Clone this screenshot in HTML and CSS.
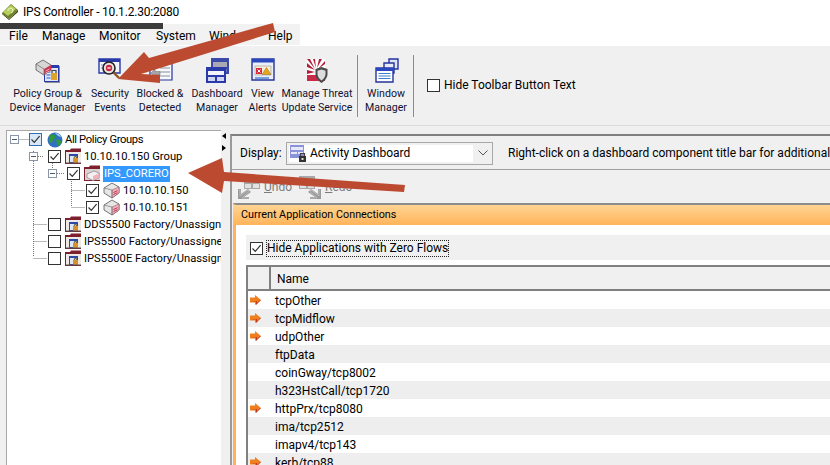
FILE: index.html
```html
<!DOCTYPE html>
<html lang="en">
<head>
<meta charset="utf-8">
<title>IPS Controller</title>
<link rel="stylesheet" href="styles.css">
</head>
<body>
<svg class="defs" width="0" height="0" aria-hidden="true">
  <defs>
    <symbol id="tick" viewBox="0 0 11 11"><path d="M1.5 5.5 4.3 8.3 9.6 2.2" fill="none" stroke="#333" stroke-width="1.2"/></symbol>
    <symbol id="folder" viewBox="0 0 17 17">
      <path d="M0 2h5l1-1.5h10V16H0z" fill="#7d1f2c"/>
      <path d="M1 4h15v11H1z" fill="#efe9e6"/>
      <path d="M4 6h9v9H4z" fill="#2e48a8"/>
      <path d="M5 8h7v6H5z" fill="#dfe6f5"/>
      <path d="M8 10h5v5H8z" fill="#d8912a"/>
      <path d="M9.3 10V8.7h2.4V10" fill="none" stroke="#553" stroke-width="1"/>
      <path d="M1 15h15" stroke="#555" stroke-width="1"/>
    </symbol>
    <symbol id="openfolder" viewBox="0 0 17 17">
      <path d="M0 2h5l1-1.5h10V16H0z" fill="#7d1f2c"/>
      <path d="M1 4h15v11H1z" fill="#d9d2d2"/>
      <path d="M3 9l7-3 5 2v5l-6 2.500-6-3z" fill="#f4f0f0" stroke="#8a7a7c" stroke-width=".7"/>
      <path d="M9 11l6-2.500v4.500l-6 2.500z" fill="#eeb2bd"/>
    </symbol>
    <symbol id="device" viewBox="0 0 17 17">
      <path d="M1 6 9 1l7 4v6l-7 5-8-5z" fill="#e9e6e6" stroke="#666" stroke-width=".9"/>
      <path d="M9 8l7-3v6l-7 5z" fill="#efb3bf" stroke="#8c6068" stroke-width=".6"/>
      <path d="M10.500 10.500l4-1.800M10.500 12.500l4-1.800" stroke="#c8324c" stroke-width="1"/>
      <path d="M1 6l8 2v8" fill="none" stroke="#777" stroke-width=".7"/>
    </symbol>
    <symbol id="flag" viewBox="0 0 11 10">
      <path d="M0 2.500h5V0l6 5-6 5V7.500H0z" fill="#f07f1e"/>
      <path d="M0 6.500h6V10l5-5-1 0-3 3V6z" fill="#c23a18"/>
    </symbol>
    <symbol id="undoicon" viewBox="0 0 24 24">
      <path d="M7 1h16v13H7z" fill="#a8a8a8"/>
      <path d="M8 4h14v3H8zM8 9h6v4H8zM16 9h6v4h-6z" fill="#e2e2e2"/>
      <path d="M1 14h3v5l7-5 3 3-7 5h5v2H1z" fill="#9a9a9a"/>
      <path d="M2 15h1v6l8-6 1 1.500L5 23h7" fill="none" stroke="#c8c8c8" stroke-width=".7"/>
    </symbol>
    <symbol id="redoicon" viewBox="0 0 24 24">
      <path d="M1 1h16v13H1z" fill="#a8a8a8"/>
      <path d="M2 4h14v3H2zM2 9h6v4H2zM10 9h6v4h-6z" fill="#e2e2e2"/>
      <path d="M23 14h-3v5l-7-5-3 3 7 5h-5v2h11z" fill="#9a9a9a"/>
      <path d="M22 15h-1v6l-8-6-1 1.500L19 23h-7" fill="none" stroke="#c8c8c8" stroke-width=".7"/>
    </symbol>
  </defs>
</svg>

<header class="titlebar">
  <svg class="appicon" width="16" height="16" viewBox="0 0 16 16" aria-hidden="true">
    <path d="M0 9 9 0l7 6-9 9z" fill="#6f7f2a"/>
    <path d="M1 8 9 1l5 4-8 7z" fill="#b6cf5e"/>
    <path d="M0 9l7 6 9-9v2l-9 8-7-6z" fill="#39420f"/>
    <path d="M6 7a2.500 2.500 0 1 1 3 2" fill="none" stroke="#eef5c4" stroke-width="1"/>
  </svg>
  <span class="apptitle">IPS Controller - 10.1.2.30:2080</span>
</header>

<nav class="menubar">
  <span class="m-file">File</span><span class="m-manage">Manage</span><span class="m-monitor">Monitor</span><span class="m-system">System</span><span class="m-window">Window</span><span class="m-help">Help</span>
</nav>

<section class="toolbar">
  <div class="tools">
    <div class="tool">
      <svg width="26" height="26" viewBox="0 0 26 26" aria-hidden="true">
        <path d="M10 8h15v17H10z" fill="#8d8d9a"/>
        <path d="M9 7h15v17H9z" fill="#2a3aa8"/>
        <path d="M10 10h13v13H10z" fill="#dfe6f6"/>
        <path d="M11.500 14h4M11.500 17h4M11.500 20h4" stroke="#3158c0" stroke-width="1.200"/>
        <path d="M16 15h6v7h-6z" fill="#e0a22a"/>
        <path d="M17 15v-2.500h4V15" fill="none" stroke="#444" stroke-width="1.200"/>
        <path d="M1 6 8 2l8 5v5l-7 5-8-5z" fill="#d6d6d6" stroke="#555" stroke-width=".8"/>
        <path d="M9 11l7-4v5l-7 5z" fill="#cf3350"/>
        <path d="M1 6l8 5v6" fill="none" stroke="#666" stroke-width=".7"/>
        <path d="M10.500 13l4-2M10.500 15l4-2" stroke="#f2b7c1" stroke-width=".9"/>
      </svg>
      <span>Policy Group &amp;<br>Device Manager</span>
    </div>
    <div class="tool">
      <svg width="26" height="26" viewBox="0 0 26 26" aria-hidden="true">
        <path d="M2 1h21v14H2z" fill="#f3f5fb" stroke="#2a3aa8" stroke-width="1.400"/>
        <path d="M2 1h21v3H2z" fill="#2a3aa8"/>
        <path d="M4 7h5M4 10h4" stroke="#7d8fd0"/>
        <circle cx="12" cy="10" r="6" fill="#e6e6e6" stroke="#222" stroke-width="1.600"/>
        <circle cx="12" cy="10" r="3.200" fill="#c92840"/>
        <path d="M10.300 10h3.400" stroke="#fff" stroke-width="1.200"/>
        <path d="M16.500 14.500 22 20" stroke="#8a5a20" stroke-width="2.400"/>
      </svg>
      <span>Security<br>Events</span>
    </div>
    <div class="tool">
      <svg width="26" height="26" viewBox="0 0 26 26" aria-hidden="true">
        <path d="M3 1h22v21H3z" fill="#f7f8fc" stroke="#24349c" stroke-width="1.200"/>
        <path d="M3 1h22v3H3z" fill="#2a48c0"/>
        <path d="M13 10h10M13 14h10M13 18h10" stroke="#8b8f9c"/>
        <path d="M4 15l4-4v2.500h5v3.500H8v2.500z" fill="#a6a6a6" stroke="#777" stroke-width=".6"/>
      </svg>
      <span>Blocked &amp;<br>Detected</span>
    </div>
    <div class="tool">
      <svg width="26" height="26" viewBox="0 0 26 26" aria-hidden="true">
        <path d="M7 0h18v16H7z" fill="#3b4aa6"/>
        <path d="M9 4h14v5H9z" fill="#a9a9b4"/>
        <path d="M9 11h14v3H9z" fill="#6e78b8"/>
        <path d="M2 9h20v16H2z" fill="#2a3aa8"/>
        <path d="M4 13h16v4H4z" fill="#f2f4fb"/>
        <path d="M4 19h7v4H4zM13 19h7v4h-7z" fill="#cfd6f0"/>
      </svg>
      <span>Dashboard<br>Manager</span>
    </div>
    <div class="tool">
      <svg width="24" height="26" viewBox="0 0 24 26" aria-hidden="true">
        <path d="M1 1h22v21H1z" fill="#eceef6" stroke="#24349c" stroke-width="1.400"/>
        <path d="M1 1h22v3.500H1z" fill="#2a48c0"/>
        <path d="M4 8h16v9H4z" fill="#f4edd8" stroke="#999" stroke-width=".6"/>
        <path d="M5 10h6v6H5z" fill="#d9283a"/>
        <path d="M6.500 11.500l3 3m0-3l-3 3" stroke="#fff"/>
        <path d="M15.500 9.500l4.500 7h-9z" fill="#e8a51c" stroke="#7a5a10" stroke-width=".4"/>
        <path d="M4 20h14" stroke="#3f7fd0" stroke-width="1.400"/>
      </svg>
      <span>View<br>Alerts</span>
    </div>
    <div class="tool">
      <svg width="24" height="26" viewBox="0 0 24 26" aria-hidden="true">
        <path d="M2 1h18v22H2z" fill="#fff"/>
        <path d="M2 1h3l5 10zM8 1h2l1 9zM14 1h3l-5 9zM20 3v3l-7 5zM2 5l8 7-8-3zM2 12l8 2-8 2z" fill="#b31d3c"/>
        <path d="M2 17h18v6H2z" fill="#c92a48"/>
        <path d="M16.500 9l6 2v5c0 4-3 7-6 9-3-2-6-5-6-9v-5z" fill="#4a4a4a"/>
        <path d="M16.500 11.500l4 1.200V16c0 3-2 5-4 6.500-2-1.500-4-3.500-4-6.500v-3.300z" fill="#dcdcdc"/>
      </svg>
      <span>Manage Threat<br>Update Service</span>
    </div>
  </div>
  <i class="sep sep-a"></i>
  <div class="tool tool-win">
    <svg width="25" height="26" viewBox="0 0 25 26" aria-hidden="true">
      <path d="M15 1h9v10h-9z" fill="#dfe3f6" stroke="#24349c" stroke-width="1.400"/>
      <path d="M10 5h10v10H10z" fill="#e8ebf9" stroke="#24349c" stroke-width="1.400"/>
      <path d="M2 10h17v14H2z" fill="#fff" stroke="#24349c" stroke-width="1.400"/>
      <path d="M2 10h17v3H2z" fill="#2a48c0"/>
      <path d="M4.500 15.500h12M4.500 18h12M4.500 20.500h12" stroke="#3f7fd0" stroke-width="1.200"/>
    </svg>
    <span>Window<br>Manager</span>
  </div>
  <i class="sep sep-b"></i>
  <label class="hide-text"><span class="chk"></span>Hide Toolbar Button Text</label>
</section>

<main class="workspace">
  <aside class="tree">
    <svg class="treelines" width="110" height="135" aria-hidden="true">
      <path d="M19.500 8.500h9M33.500 20v106M38 25.500h6M33.500 93.500h14M33.500 110.500h14M33.500 127.500h14M52.500 30v8M57 42.500h7M71.500 48v28M71.500 59.500h13M71.500 76.500h13" fill="none" stroke="#777" stroke-dasharray="1 1"/>
    </svg>
    <div class="row r0"><b class="exp"></b><span class="chk chk-hover"><svg width="11" height="11"><use href="#tick"/></svg></span>
      <svg class="globe" width="16" height="16" viewBox="0 0 16 16" aria-hidden="true"><circle cx="8" cy="8" r="7.500" fill="#2f6fc4"/><path d="M3 3c2-1 4-1 5 1s-1 3-2 4 0 3-2 3-3-4-1-8zM9 8c2-1 5 0 5 2s-2 4-3 4-1-3-2-6z" fill="#2f9a3a"/><path d="M8 1c3 0 5 1 6 4l-3-1z" fill="#9bd0ef"/></svg>
      <span class="name n0">All Policy Groups</span></div>
    <div class="row r1"><b class="exp"></b><span class="chk"><svg width="11" height="11"><use href="#tick"/></svg></span><svg class="ti" width="17" height="17"><use href="#folder"/></svg><span class="name">10.10.10.150 Group</span></div>
    <div class="row r2"><b class="exp"></b><span class="chk"><svg width="11" height="11"><use href="#tick"/></svg></span><svg class="ti" width="17" height="17"><use href="#openfolder"/></svg><span class="name sel">IPS_CORERO</span></div>
    <div class="row r3"><span class="chk"><svg width="11" height="11"><use href="#tick"/></svg></span><svg class="ti" width="17" height="17"><use href="#device"/></svg><span class="name n3">10.10.10.150</span></div>
    <div class="row r3"><span class="chk"><svg width="11" height="11"><use href="#tick"/></svg></span><svg class="ti" width="17" height="17"><use href="#device"/></svg><span class="name n3">10.10.10.151</span></div>
    <div class="row r4"><span class="chk"></span><svg class="ti" width="17" height="17"><use href="#folder"/></svg><span class="name">DDS5500 Factory/Unassigned</span></div>
    <div class="row r4"><span class="chk"></span><svg class="ti" width="17" height="17"><use href="#folder"/></svg><span class="name">IPS5500 Factory/Unassigned</span></div>
    <div class="row r4"><span class="chk"></span><svg class="ti" width="17" height="17"><use href="#folder"/></svg><span class="name">IPS5500E Factory/Unassigned</span></div>
  </aside>

  <div class="split"><i class="tri tri-l"></i><i class="tri tri-r"></i></div>

  <section class="content">
    <div class="display">
      <span class="d-label">Display:</span>
      <div class="combo">
        <div class="combo-field">
          <svg width="17" height="18" viewBox="0 0 17 18" aria-hidden="true"><path d="M0 1h14v13H0z" fill="#8b93d8"/><path d="M1 3h12v3H1zM1 8h6v2H1zM8 8h5v2H8z" fill="#e7e9fa"/><path d="M9 12h7v6H9z" fill="#333"/><path d="M10.500 12V9.500h4V12" fill="none" stroke="#444" stroke-width="1.200"/><path d="M11.500 14h2v2h-2z" fill="#ddd"/></svg>
          <span>Activity Dashboard</span>
        </div>
        <svg class="chev" width="10" height="6" viewBox="0 0 10 6" aria-hidden="true"><path d="M.5.500 5 5 9.500.500" fill="none" stroke="#555"/></svg>
      </div>
      <span class="d-hint">Right-click on a dashboard component title bar for additional options.</span>
    </div>
    <div class="undo">
      <svg width="24" height="24" aria-hidden="true"><use href="#undoicon"/></svg><span class="u-text"><u>U</u>ndo</span>
      <svg class="redo-i" width="24" height="24" aria-hidden="true"><use href="#redoicon"/></svg><span class="u-text"><u>R</u>edo</span>
    </div>
    <div class="panel">
      <div class="panel-head">Current Application Connections</div>
      <div class="panel-body">
        <div class="zero"><span class="chk"><svg width="11" height="11"><use href="#tick"/></svg></span><span class="focus">Hide Applications with Zero Flows</span></div>
        <div class="table">
          <div class="thead"><span class="th-flag"></span><span class="th-name">Name</span></div>
          <div class="tr"><svg width="11" height="10"><use href="#flag"/></svg><span>tcpOther</span></div>
          <div class="tr"><svg width="11" height="10"><use href="#flag"/></svg><span>tcpMidflow</span></div>
          <div class="tr"><svg width="11" height="10"><use href="#flag"/></svg><span>udpOther</span></div>
          <div class="tr"><i class="noflag"></i><span>ftpData</span></div>
          <div class="tr"><i class="noflag"></i><span>coinGway/tcp8002</span></div>
          <div class="tr"><i class="noflag"></i><span>h323HstCall/tcp1720</span></div>
          <div class="tr"><svg width="11" height="10"><use href="#flag"/></svg><span>httpPrx/tcp8080</span></div>
          <div class="tr"><i class="noflag"></i><span>ima/tcp2512</span></div>
          <div class="tr"><i class="noflag"></i><span>imapv4/tcp143</span></div>
          <div class="tr"><svg width="11" height="10"><use href="#flag"/></svg><span>kerb/tcp88</span></div>
        </div>
      </div>
    </div>
  </section>
</main>

<div class="redaction"></div>
<svg class="arrows" width="830" height="465" viewBox="0 0 830 465" aria-hidden="true">
  <path d="M273 23 275 32 141 74 160 75 160 83 118 79 144 52 149 58z" fill="#bc4a30"/>
  <path d="M405 185 404 192 224 181 222 193 188 173 222 158 224 172z" fill="#bc4a30"/>
</svg>
</body>
</html>
```
FILE: styles.css
```css
* { box-sizing: border-box; }
html, body { margin: 0; padding: 0; }
body {
  position: relative;
  width: 830px;
  height: 465px;
  overflow: hidden;
  background: #fff;
  color: #000;
  font-family: Roboto, "Open Sans", "Liberation Sans", sans-serif;
  font-size: 12px;
}
.defs { position: absolute; }

.titlebar { display: flex; align-items: center; height: 24px; padding-left: 2px; gap: 5px; }
.apptitle { font-size: 12px; letter-spacing: -.2px; }
.appicon { flex: none; }

.redaction { position: absolute; left: 0; top: 23px; width: 163px; height: 6px; background: #3c3c3c; }

.menubar { position: relative; height: 21px; width: 300px; background: #f2f2f2; display: flex; align-items: center; font-size: 12px; padding: 3px 0 0 9px; }
.menubar span { flex: none; }
.m-file { width: 33px; }
.m-manage { width: 57px; }
.m-monitor { width: 57px; }
.m-system { width: 53px; }
.m-window { width: 59px; }

.toolbar {
  display: flex;
  margin-top: 1px;
  height: 79px;
  background: #f0f0f0;
  align-items: flex-start;
  padding-left: 12px;
}
.tools { display: grid; grid-template-columns: 71px 34px 46px 48px 23px 66px; column-gap: 10px; }
.tool { display: flex; flex-direction: column; align-items: center; padding-top: 12px; font-size: 10.6px; line-height: 14px; color: #101030; text-align: center; white-space: nowrap; }
.tool svg { margin-bottom: 3px; height: 26px; flex: none; }
.tool span { display: block; }
.tool-win { width: 38px; margin-left: 9px; }
.sep { display: block; width: 1px; height: 62px; margin-top: 9px; background: #8c8c8c; flex: none; }
.sep-a { margin-left: 7px; }
.sep-b { margin-left: 8px; }
.hide-text { display: flex; align-items: center; gap: 4px; margin: 32px 0 0 13px; font-size: 12px; }

.chk { flex: none; display: flex; align-items: center; justify-content: center; width: 13px; height: 13px; border: 1px solid #333; background: #fff; }
.chk svg { display: block; }
.chk-hover { border-color: #2f6fb0; background: #d8e8f6; }

.workspace { display: flex; height: 340px; background: #f0f0f0; border-top: 1px solid #dcdcdc; }

.tree { position: relative; width: 215px; margin: 4px 0 0 6px; background: #fff; border-top: 1px solid #a8a8a8; border-left: 1px solid #a8a8a8; overflow: hidden; font-size: 11.2px; flex: none; }
.treelines { position: absolute; left: -7px; top: 0; }
.row { position: relative; display: flex; align-items: center; height: 17px; white-space: nowrap; }
.exp { flex: none; position: relative; display: block; width: 9px; height: 9px; border: 1px solid #8a96a6; background: #fff; }
.exp::after { content: ""; position: absolute; left: 1px; right: 1px; top: 3px; height: 1px; background: #4b5a70; }
.r0 { padding-left: 3px; }
.r0 .chk { margin-left: 10px; }
.globe { margin-left: 5px; flex: none; }
.n0 { margin-left: 3px; letter-spacing: -.35px; }
.r1 { padding-left: 22px; }
.r1 .chk { margin-left: 10px; }
.r2 { padding-left: 41px; }
.r2 .chk { margin-left: 10px; }
.r3 { padding-left: 79px; }
.r4 { padding-left: 41px; }
.ti { margin-left: 4px; flex: none; }
.name { margin-left: 2px; }
.n3 { margin-left: 3px; }
.sel { background: #3399ff; color: #fff; height: 16px; line-height: 16px; padding: 0 1px; }

.split { position: relative; width: 9px; flex: none; }
.tri { position: absolute; left: 1px; width: 0; height: 0; border-top: 3px solid transparent; border-bottom: 3px solid transparent; }
.tri-l { top: 7px; border-right: 4px solid #000; }
.tri-r { top: 19px; border-left: 4px solid #000; }

.content { flex: none; width: 600px; margin-top: 8px; border-top: 2px solid #808080; border-left: 2px solid #9a9a9a; }

.display { display: flex; align-items: center; height: 34px; border-bottom: 1px solid #a0a0a0; padding: 1px 0 0 8px; white-space: nowrap; }
.d-label { width: 46px; flex: none; }
.combo { flex: none; display: flex; align-items: center; width: 207px; height: 23px; border: 1px solid #a8a8a8; background: #f0f0f0; padding: 2px; }
.combo-field { display: flex; align-items: center; gap: 3px; width: 184px; height: 17px; background: #fff; padding-left: 1px; }
.combo-field svg { flex: none; }
.chev { margin-left: 5px; flex: none; }
.d-hint { margin-left: 15px; }

.undo { display: flex; align-items: center; height: 33px; padding-left: 5px; color: #7c7c7c; }
.u-text { margin-left: 3px; width: 32px; }
.redo-i { margin-left: 2px; }

.panel { margin-left: 1px; border-top: 2px solid #8c8c8c; border-left: 3px solid #ffb060; background: #fff; height: 300px; }
.panel-head { height: 20px; line-height: 20px; background: linear-gradient(#ffd493, #ffb45a); margin-left: -3px; padding-left: 8px; font-size: 10.8px; }
.panel-body { padding: 10px 0 0 10px; }
.zero { display: flex; align-items: center; height: 25px; background: #f0f0f0; padding: 1px 0 0 4px; gap: 4px; }
.focus { outline: 1px dotted #222; height: 15px; line-height: 15px; white-space: nowrap; }
.table { margin-top: 5px; border-top: 2px solid #808080; border-left: 2px solid #808080; }
.thead { display: flex; height: 24px; background: #f0f0f0; border-bottom: 2px solid #808080; }
.th-flag { width: 23px; border-right: 2px solid #808080; }
.th-name { padding-left: 6px; line-height: 25px; }
.tr { display: flex; align-items: center; height: 18px; padding-left: 2px; }
.tr:nth-child(odd) { background: #eee; }
.tr svg, .noflag { width: 11px; flex: none; }
.tr span { margin-left: 14px; padding-top: 1px; white-space: nowrap; }

.arrows { position: absolute; left: 0; top: 0; pointer-events: none; }
```
